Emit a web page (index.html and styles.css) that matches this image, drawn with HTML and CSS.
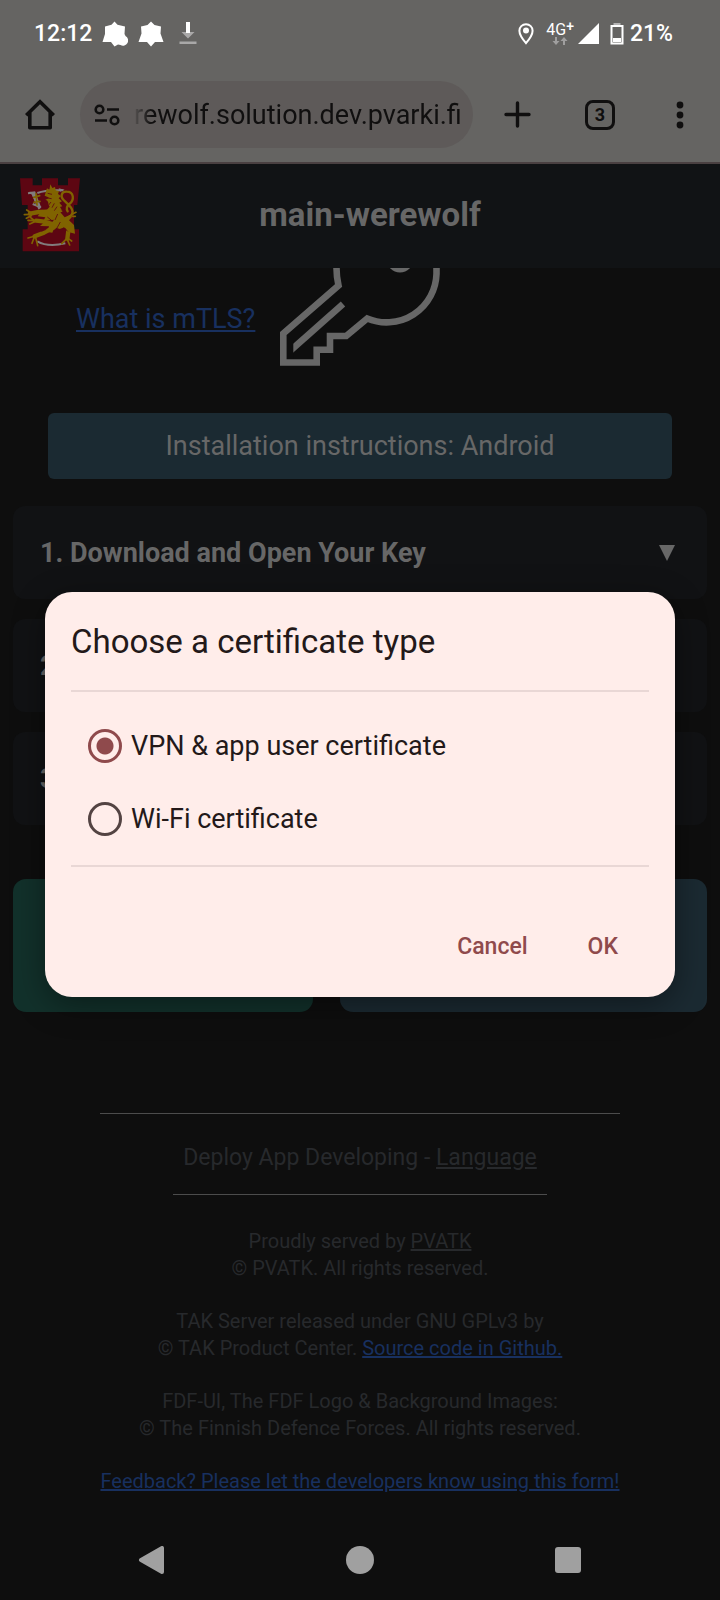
FILE: index.html
```html
<!DOCTYPE html>
<html lang="en">
<head>
<meta charset="utf-8">
<meta name="viewport" content="width=device-width, initial-scale=1">
<title>main-werewolf</title>
<link rel="stylesheet" href="styles.css">
</head>
<body>
<div class="status-bar">
  <div class="status-group">
    <span class="status-text">12:12</span>
    <svg class="status-icon" width="26" height="26" viewBox="0 0 26 26" fill="#fff"><path d="M12.500.500l3 3.200 7.500 1.800-.500 7.500 1 2a5 5 0 0 1-5 9l-2.500-.500-3.500 2-3.500-4.500H.500l2.500-8V5.500L9.500 3.700z"/></svg>
    <svg class="status-icon" width="26" height="26" viewBox="0 0 26 26" fill="#fff"><path d="M13 .500l3.500 3.500 6.500 1.500-.500 7L25.500 21H17l-4 4.500L9 21H.500L3.500 12.500 3 5.500 9.500 4z"/></svg>
    <svg class="status-icon download-icon" width="18" height="26" viewBox="0 0 18 26"><path d="M7 1h4v11H7z" fill="#fff"/><path d="M2.500 11H7v1h4v-1h4.500L9 17.500z" fill="#a9a8a8"/><path d="M.500 20.500h17V23H.500z" fill="#a9a8a8"/></svg>
  </div>
  <div class="status-group">
    <svg class="pin-icon" width="16" height="22" viewBox="0 0 16 22"><path d="M8 1.300c3.800 0 6.600 2.800 6.600 6.400 0 4.800-6.600 12.400-6.600 12.400S1.400 12.500 1.400 7.700C1.400 4.100 4.200 1.300 8 1.300z" fill="none" stroke="#fff" stroke-width="2"/><circle cx="8" cy="7.600" r="3" fill="#fff"/></svg>
    <span class="network"><span class="network-name">4G<sup>+</sup></span><svg width="16" height="8" viewBox="0 0 16 8" fill="#a09f9f"><path d="M3 0h2v4h2.500L4 8 .500 4H3zM11 8h2V4h2.500L12 0 8.500 4H11z"/></svg></span>
    <svg width="21" height="21" viewBox="0 0 21 21"><path d="M21 0v21H0z" fill="#fff"/></svg>
    <svg class="battery-icon" width="14" height="22" viewBox="0 0 14 22"><path d="M3.500 0h7v2.500h-7z" fill="#b5b4b4"/><path d="M1.500 3h11v17.500h-11z" fill="none" stroke="#fff" stroke-width="2"/><path d="M3 15h8v4H3z" fill="#fff"/></svg>
    <span class="status-text">21%</span>
  </div>
</div>

<div class="toolbar">
  <button class="tool-button" aria-label="Home"><svg width="30" height="31" viewBox="0 0 30 31" fill="none" stroke="#100f0f" stroke-width="3.600" stroke-linejoin="round"><path d="M1.200 16.300L15 2.800l13.800 13.500" stroke-linejoin="miter"/><path d="M4.800 13.500v15.200h20.400V13.500"/></svg></button>
  <div class="address-bar">
    <svg width="26" height="22" viewBox="0 0 26 22" fill="none" stroke="#100f0f" stroke-width="2.600"><circle cx="5.500" cy="5.500" r="3.800"/><circle cx="20.500" cy="16.500" r="3.800"/><path d="M13 5.500h12M1 16.500h12"/></svg>
    <input class="address" aria-label="Address" type="text" value="rewolf.solution.dev.pvarki.fi">
  </div>
  <button class="tool-button new-tab-button" aria-label="New tab"><svg width="27" height="27" viewBox="0 0 27 27" stroke="#100f0f" stroke-width="3.400" stroke-linecap="round"><path d="M13.500 2v23M2 13.500h23"/></svg></button>
  <button class="tool-button tabs-button">3</button>
  <button class="tool-button" aria-label="Menu"><svg width="8" height="28" viewBox="0 0 8 28" fill="#100f0f"><circle cx="4" cy="4" r="3.400"/><circle cx="4" cy="14" r="3.400"/><circle cx="4" cy="24" r="3.400"/></svg></button>
</div>

<header class="site-header">
  <svg class="crest" width="60" height="74" viewBox="60 54 180 220">
    <path fill="#5d0612" d="M60 54h38v21h28V54h48v21h30V54h36l-8 80h-10v73h15v66H68v-66h15v-73H66z"/>
    <g fill="none" stroke="#817c7d" stroke-width="6"><path d="M84 99l22-3M96 96l22 50M112 98c20-8 42-10 78-8M98 131l25 10M112 243c24 14 50 14 84 6"/></g>
    <path fill="#817c7d" d="M88 94l18 2 18 46-14-4-14-34zM176 84l18 4-14 6z"/>
    <g fill="none" stroke="#806300" stroke-linecap="round" stroke-linejoin="round">
      <path stroke-width="7" d="M208 169c22-14 2-32-12-45-18-14-12-31 4-30 22 0 24 25 8 37-7 6-10 14-5 22"/>
      <path stroke-width="16" d="M150 119l22 45 2 32"/>
      <path stroke-width="13" d="M150 154l-34 1-26 5M158 191l-30-8-20-2M178 185l28 18-4 32M162 201l-30 16-28 11"/>
      <path stroke-width="5" d="M93 157l-13-8M91 162l-18 1M94 166l-15 8M103 181l-19-1M104 184l-15 7M101 179l-9-7M106 227l-22 6M103 230l-7 19M107 232l6 24M205 235l10 7M202 238l7 16M198 237l-13 13M216 162l12-6M218 168h8M108 100l3 34M101 111l18-5M102 126l18-3"/>
    </g>
    <path fill="#806300" d="M137 96l4-12 7 5 3-17 6 11 8-3 2 10 10 2-3 9 9 6-7 7 10 9-8 4 9 11-7 2 9 14-8 2 13 15 17-8 5 7-9 10 15 14 3 26-20-5-7-16-19 7-15-7-7 18-15-2 5-17-27-1 10-9 25-1 7-9-32 4 6-11-23-3 8-11-20 1 10-7 30-3 8-9-5-9 9-4-17-8 14-5-16-7z"/>
    <g fill="none" stroke="#5d0612" stroke-width="2.500"><path d="M143 99l13 3M140 113l15 2M153 125l-7 9M163 129l-7 13M171 139l-8 12M142 170l15 12M173 161l-8 18M181 185l-10 18M191 201l12 12M124 213l15-6M185 148l8 13"/></g>
  </svg>
  <h1 class="site-title">main-werewolf</h1>
</header>

<main class="content">
  <div class="intro">
    <a class="link intro-link" href="#mtls">What is mTLS?</a>
    <svg class="key" width="160" height="98" viewBox="0 0 160 98" fill="none" stroke="#676767" stroke-width="6.600"><path d="M56.500 0Q56.500 9 58.500 17.500L3.300 65.500v29h33.400V81.700H50V68h16.200l21-17.500A50 50 0 0 0 156.500 6V0"/><path d="M63 36L10 83"/><path d="M7 72h6.300v19H7z" fill="#0e0e0e" stroke="none"/><circle cx="120" cy="-9" r="13.500" fill="#676767" stroke="none"/></svg>
  </div>
  <button class="platform-button">Installation instructions: Android</button>
  <div class="steps">
    <button class="step"><span>1. Download and Open Your Key</span><svg width="16" height="16" viewBox="0 0 16 16"><path d="M0 0h16L8 16z" fill="#676767"/></svg></button>
    <button class="step"><span>2.</span></button>
    <button class="step"><span>3.</span></button>
  </div>
  <div class="page-actions">
    <button class="page-action page-action-back" aria-label="Back"></button>
    <button class="page-action page-action-next" aria-label="Next"></button>
  </div>
</main>

<footer class="footer">
  <p class="footer-lead">Deploy App Developing - <a class="quiet-link" href="#language">Language</a></p>
  <div class="footer-notes">
    <p>Proudly served by <a class="quiet-link" href="#pvatk">PVATK</a><br>© PVATK. All rights reserved.</p>
    <p>TAK Server released under GNU GPLv3 by<br>© TAK Product Center. <a class="link" href="#source">Source code in Github.</a></p>
    <p>FDF-UI, The FDF Logo &amp; Background Images:<br>© The Finnish Defence Forces. All rights reserved.</p>
    <p><a class="link" href="#feedback">Feedback? Please let the developers know using this form!</a></p>
  </div>
</footer>

<nav class="system-nav">
  <button class="nav-button" aria-label="Back"><svg width="28" height="28" viewBox="0 0 28 28"><path d="M3 14L24 2v24z" fill="#a0a0a0" stroke="#a0a0a0" stroke-width="4" stroke-linejoin="round"/></svg></button>
  <button class="nav-button" aria-label="Home"><svg width="28" height="28" viewBox="0 0 28 28"><circle cx="14" cy="14" r="14" fill="#a0a0a0"/></svg></button>
  <button class="nav-button" aria-label="Recent apps"><svg width="28" height="28" viewBox="0 0 28 28"><rect x="1" y="1" width="26" height="26" rx="3" fill="#a0a0a0"/></svg></button>
</nav>

<div class="overlay">
  <form class="dialog" role="dialog" aria-labelledby="dialog-title">
    <h2 class="dialog-title" id="dialog-title">Choose a certificate type</h2>
    <div class="options">
      <label class="option"><input class="radio" type="radio" name="type" checked>VPN &amp; app user certificate</label>
      <label class="option"><input class="radio" type="radio" name="type">Wi-Fi certificate</label>
    </div>
    <div class="dialog-actions">
      <button class="dialog-button" type="button">Cancel</button>
      <button class="dialog-button" type="button">OK</button>
    </div>
  </form>
</div>
</body>
</html>
```
FILE: styles.css
```css
* {
  box-sizing: border-box;
}

body {
  position: relative;
  display: flex;
  flex-direction: column;
  min-height: 100vh;
  margin: 0;
  background: #0e0e0e;
  color: #676767;
  font-family: Roboto, "Liberation Sans", sans-serif;
}

h1, h2, p {
  margin: 0;
}

button {
  border: 0;
  padding: 0;
  background: none;
  color: inherit;
  font: inherit;
}

svg {
  display: block;
  flex: none;
}

.status-bar {
  display: flex;
  justify-content: space-between;
  align-items: center;
  height: 67px;
  padding: 0 47px 0 34px;
  background: #656462;
  color: #fff;
}

.status-group {
  display: flex;
  align-items: center;
  gap: 10px;
}

.status-group:last-child {
  gap: 6px;
}

.status-text {
  font-size: 23px;
  font-weight: 500;
  line-height: 28px;
}

.download-icon {
  margin-left: 5px;
}

.pin-icon {
  margin-right: 6px;
}

.network {
  display: flex;
  flex-direction: column;
  align-items: center;
  margin-right: -2px;
}

.network-name {
  font-size: 16px;
  line-height: 14px;
}

.network-name sup {
  font-size: 14px;
  font-weight: 500;
  line-height: 0;
  vertical-align: 4px;
}

.battery-icon {
  margin-left: 5px;
}

.toolbar {
  display: flex;
  align-items: center;
  height: 97px;
  border-bottom: 2px solid #4a4041;
  background: #656462;
  color: #100f0f;
}

.tool-button {
  display: flex;
  flex: none;
  justify-content: center;
  align-items: center;
  width: 80px;
  height: 67px;
}

.address-bar {
  display: flex;
  flex: 1;
  align-items: center;
  gap: 14px;
  min-width: 0;
  height: 67px;
  padding: 0 8px 0 14px;
  border-radius: 34px;
  background: #5e5a59;
}

.address {
  flex: 1;
  min-width: 0;
  border: 0;
  padding: 0;
  outline: 0;
  background: none;
  color: #100f0f;
  font: 400 27px/36px Roboto, sans-serif;
  -webkit-mask-image: linear-gradient(90deg, rgba(0, 0, 0, 0.1), #000 18px);
  mask-image: linear-gradient(90deg, rgba(0, 0, 0, 0.1), #000 18px);
}

.new-tab-button {
  margin-left: 4px;
}

.tabs-button {
  width: 30px;
  height: 30px;
  margin: 0 25px 0 28px;
  border: 3px solid #100f0f;
  border-radius: 8px;
  font-size: 18px;
  font-weight: 700;
}

.site-header {
  display: grid;
  grid-template-columns: 60px 1fr;
  align-items: center;
  height: 104px;
  padding: 0 60px 3px 20px;
  background: #111315;
}

.site-title {
  font-size: 33px;
  font-weight: 700;
  line-height: 40px;
  text-align: center;
}

.content {
  padding: 0 13px;
}

.intro {
  display: flex;
  gap: 25px;
  margin: 0 63px 47px;
}

.link {
  color: #18305f;
}

.intro-link {
  padding-top: 35px;
  font-size: 27px;
  line-height: 32px;
}

.platform-button {
  display: block;
  width: calc(100% - 70px);
  height: 66px;
  margin: 0 auto 27px;
  border-radius: 6px;
  background: #1b2a32;
  font-size: 27px;
}

.steps {
  display: grid;
  gap: 20px;
}

.step {
  display: flex;
  justify-content: space-between;
  align-items: center;
  height: 93px;
  padding: 0 32px 0 27px;
  border-radius: 12px;
  background: #111214;
  font-size: 27px;
  font-weight: 700;
}

.page-actions {
  display: grid;
  grid-template-columns: 300fr 367fr;
  gap: 27px;
  margin-top: 54px;
}

.page-action {
  height: 133px;
  border-radius: 13px;
}

.page-action-back {
  background: #12312b;
}

.page-action-next {
  background: #1b2a32;
}

.footer {
  display: flex;
  flex-direction: column;
  align-items: center;
  width: fit-content;
  margin: 101px auto 0;
  border-top: 1px solid #4c4c4c;
  color: #27292c;
  text-align: center;
}

.footer-lead {
  padding: 29px 10px 21px;
  border-bottom: 1px solid #4c4c4c;
  font-size: 23px;
  line-height: 30px;
}

.quiet-link {
  color: inherit;
}

.footer-notes {
  display: grid;
  gap: 26px;
  margin-top: 33px;
  font-size: 20px;
  line-height: 27px;
}

.system-nav {
  display: flex;
  justify-content: space-around;
  align-items: center;
  height: 80px;
  margin-top: auto;
  padding: 0 48px;
}

.nav-button {
  padding: 10px;
}

.overlay {
  position: absolute;
  inset: 0;
  display: flex;
  justify-content: center;
  align-items: center;
  padding: 0 45px 12px;
}

.dialog {
  flex: 1;
  padding: 30px 26px 17px;
  border-radius: 27px;
  background: #ffedea;
  box-shadow: 0 8px 32px rgba(0, 0, 0, 0.4);
  color: #231919;
}

.dialog-title {
  padding-bottom: 28px;
  border-bottom: 2px solid #e9d7d5;
  font-size: 33px;
  font-weight: 400;
  line-height: 40px;
}

.options {
  padding: 18px 17px 9px;
  border-bottom: 2px solid #e9d7d5;
}

.option {
  display: flex;
  align-items: center;
  gap: 9px;
  height: 73px;
  font-size: 27px;
}

.radio {
  flex: none;
  appearance: none;
  width: 34px;
  height: 34px;
  margin: 0;
  border: 3px solid #534342;
  border-radius: 50%;
}

.radio:checked {
  border-color: #8f4a4c;
  background: radial-gradient(circle, #8f4a4c 8px, transparent 9px);
}

.dialog-actions {
  display: flex;
  justify-content: flex-end;
  gap: 8px;
  padding-top: 47px;
}

.dialog-button {
  height: 66px;
  padding: 0 26px;
  color: #8f4a4c;
  font-size: 23px;
  font-weight: 500;
}

.dialog-button:last-child {
  padding-right: 31px;
}
```
